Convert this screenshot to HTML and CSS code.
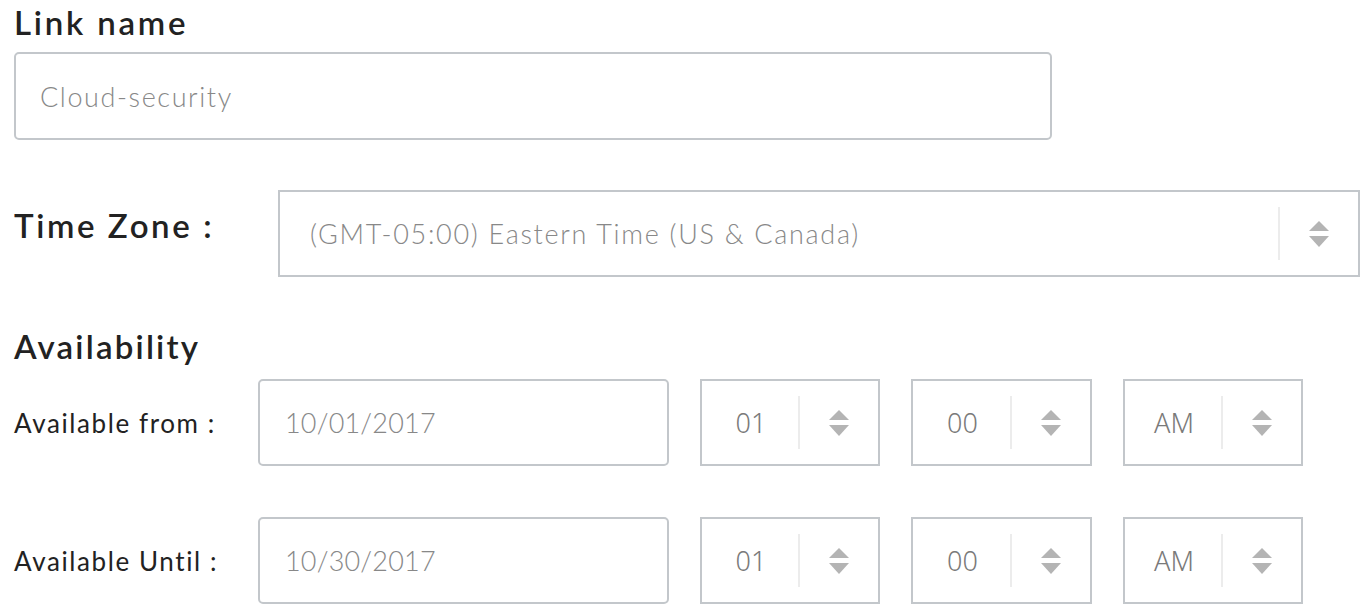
FILE: index.html
```html
<!DOCTYPE html>
<html lang="en">
<head>
<meta charset="utf-8">
<title>Link settings</title>
<link rel="stylesheet" href="styles.css">
</head>
<body>
<main class="form">
  <section class="block">
    <h2 class="heading">Link name</h2>
    <div class="input input-link"><span class="value">Cloud-security</span></div>
  </section>

  <div class="tz-row">
    <span class="tz-label">Time Zone :</span>
    <div class="select select-tz">
      <span class="select-value tz-value">(GMT-05:00) Eastern Time (US &amp; Canada)</span>
      <span class="select-arrows"><svg width="22" height="28" viewBox="0 0 22 28"><path d="M11 1 L21 11 H1 Z" /><path d="M1 16 H21 L11 27 Z" /></svg></span>
    </div>
  </div>

  <h2 class="heading heading-avail">Availability</h2>

  <div class="avail-row">
    <span class="row-label">Available from :</span>
    <div class="input input-date"><span class="value date-value">10/01/2017</span></div>
    <div class="select select-time">
      <span class="select-value time-value">01</span>
      <span class="select-arrows"><svg width="22" height="28" viewBox="0 0 22 28"><path d="M11 1 L21 11 H1 Z" /><path d="M1 16 H21 L11 27 Z" /></svg></span>
    </div>
    <div class="select select-time select-min">
      <span class="select-value time-value">00</span>
      <span class="select-arrows"><svg width="22" height="28" viewBox="0 0 22 28"><path d="M11 1 L21 11 H1 Z" /><path d="M1 16 H21 L11 27 Z" /></svg></span>
    </div>
    <div class="select select-time">
      <span class="select-value time-value">AM</span>
      <span class="select-arrows"><svg width="22" height="28" viewBox="0 0 22 28"><path d="M11 1 L21 11 H1 Z" /><path d="M1 16 H21 L11 27 Z" /></svg></span>
    </div>
  </div>

  <div class="avail-row avail-row-2">
    <span class="row-label">Available Until :</span>
    <div class="input input-date"><span class="value date-value">10/30/2017</span></div>
    <div class="select select-time">
      <span class="select-value time-value">01</span>
      <span class="select-arrows"><svg width="22" height="28" viewBox="0 0 22 28"><path d="M11 1 L21 11 H1 Z" /><path d="M1 16 H21 L11 27 Z" /></svg></span>
    </div>
    <div class="select select-time select-min">
      <span class="select-value time-value">00</span>
      <span class="select-arrows"><svg width="22" height="28" viewBox="0 0 22 28"><path d="M11 1 L21 11 H1 Z" /><path d="M1 16 H21 L11 27 Z" /></svg></span>
    </div>
    <div class="select select-time">
      <span class="select-value time-value">AM</span>
      <span class="select-arrows"><svg width="22" height="28" viewBox="0 0 22 28"><path d="M11 1 L21 11 H1 Z" /><path d="M1 16 H21 L11 27 Z" /></svg></span>
    </div>
  </div>
</main>
</body>
</html>
```

FILE: styles.css
```css
* { box-sizing: border-box; }

html, body {
  margin: 0;
  padding: 0;
  background: #ffffff;
}

body {
  font-family: Lato, "Open Sans", "Liberation Sans", sans-serif;
  color: #222222;
}

.form {
  padding: 0 0 0 14px;
  width: 1368px;
}

.heading {
  margin: 0;
  font-size: 33px;
  font-weight: 600;
  letter-spacing: 2.8px;
  line-height: 44px;
  color: #222222;
}

.input {
  border: 2px solid #c3c7cb;
  border-radius: 5px;
  background: #fff;
  display: flex;
  align-items: center;
}

.value {
  color: #888888;
  font-size: 27px;
  font-weight: 300;
  letter-spacing: 1.6px;
}

.input-link {
  margin-top: 8px;
  width: 1038px;
  height: 88px;
  padding-left: 24px;
}

.tz-row {
  display: flex;
  margin-top: 50px;
}

.tz-label {
  width: 264px;
  font-size: 33px;
  font-weight: 600;
  letter-spacing: 2.6px;
  line-height: 44px;
  padding-top: 13px;
}

.select {
  border: 2px solid #c3c7cb;
  background: #fff;
  display: flex;
  align-items: center;
  height: 87px;
}

.select-tz {
  width: 1082px;
}

.select-value {
  color: #888888;
  font-size: 27px;
  font-weight: 300;
}

.tz-value {
  flex: 1;
  padding-left: 30px;
  letter-spacing: 1.7px;
}

.select-arrows {
  width: 80px;
  height: 53px;
  border-left: 2px solid #ececec;
  display: flex;
  align-items: center;
  justify-content: center;
}

.select-arrows svg path {
  fill: #b4b4b4;
}

.heading-avail {
  margin-top: 47px;
  letter-spacing: 2.2px;
}

.avail-row {
  display: flex;
  align-items: center;
  gap: 31px;
  margin-top: 11px;
}

.avail-row-2 {
  margin-top: 51px;
}

.row-label {
  width: 213px;
  font-size: 26px;
  font-weight: 400;
  letter-spacing: 1.6px;
  color: #222222;
}

.input-date {
  width: 411px;
  height: 87px;
  padding-left: 25px;
}

.date-value {
  letter-spacing: 0.2px;
}

.select-time {
  width: 180px;
}

.select-min {
  width: 181px;
}

.time-value {
  flex: 1;
  text-align: center;
  font-family: "Noto Sans", "Open Sans", sans-serif;
  font-size: 27px;
  font-weight: 300;
  color: #7a7a7a;
  padding-left: 2px;
}
```
